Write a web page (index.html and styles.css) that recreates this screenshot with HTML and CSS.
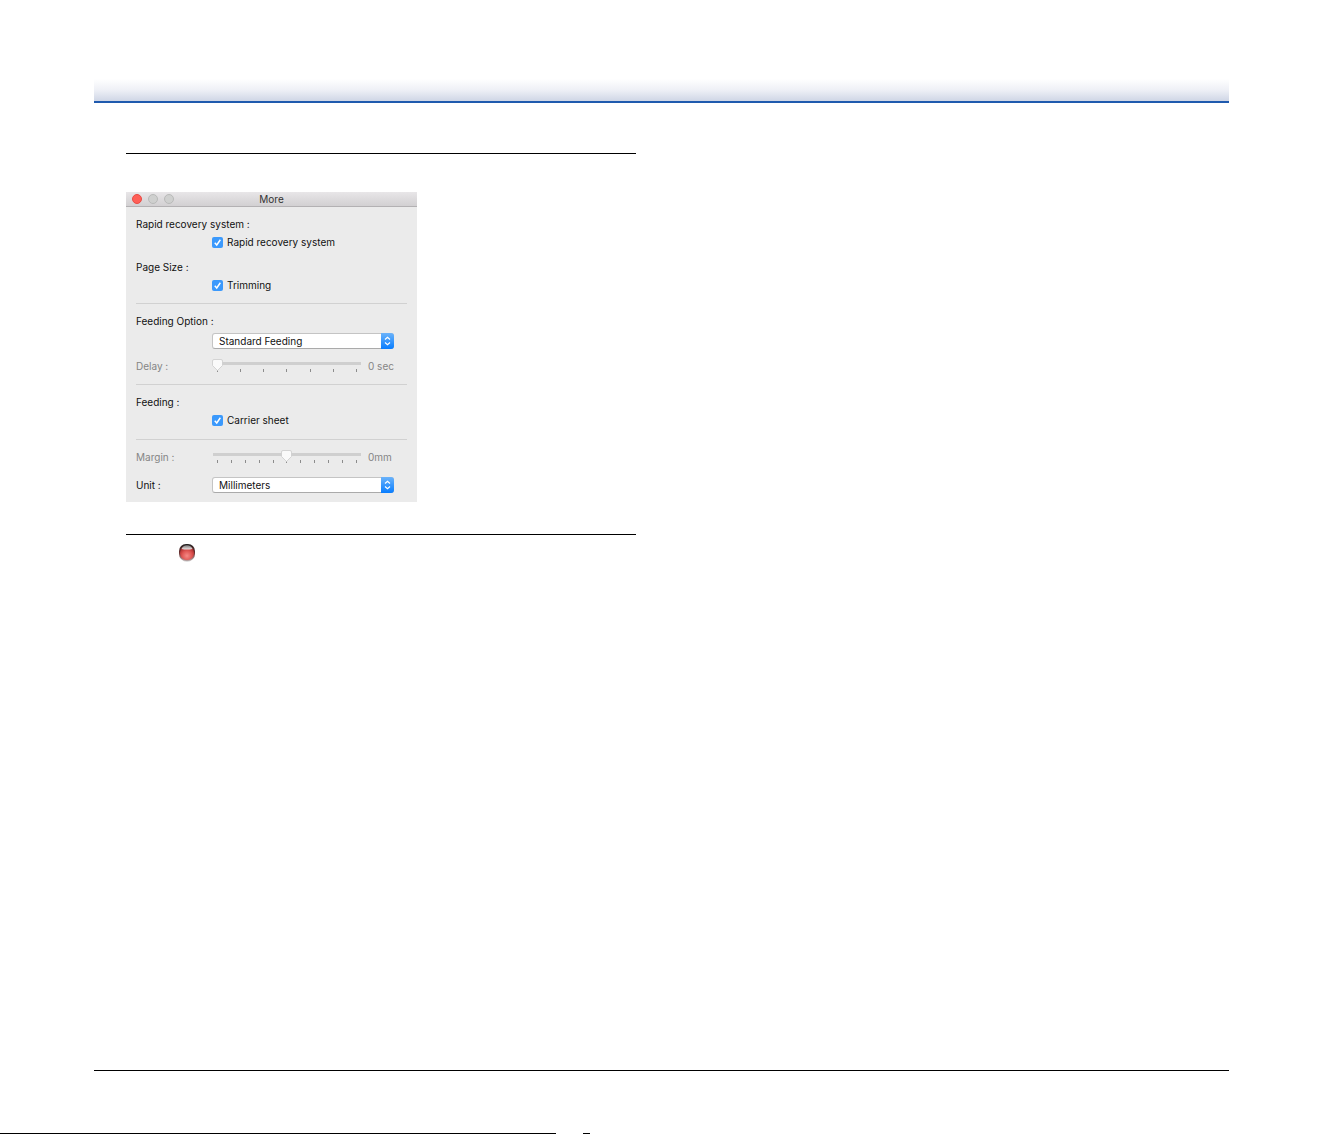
FILE: index.html
```html
<!DOCTYPE html>
<html lang="en">
<head>
<meta charset="utf-8">
<meta name="viewport" content="width=device-width, initial-scale=1">
<title>More</title>
<link rel="stylesheet" href="styles.css">
</head>
<body>
<header class="banner"></header>
<main class="content">
  <div class="column">
    <hr class="rule">
    <form class="dialog" aria-labelledby="dialog-title">
      <div class="titlebar">
        <div class="lights">
          <button type="button" class="light light-close" aria-label="Close"></button>
          <button type="button" class="light" aria-label="Minimize" disabled></button>
          <button type="button" class="light" aria-label="Zoom" disabled></button>
        </div>
        <h1 class="title" id="dialog-title">More</h1>
      </div>
      <div class="body">
        <section class="group">
          <div class="row"><span class="label">Rapid recovery system :</span></div>
          <div class="row indent"><label class="check"><input type="checkbox" checked>Rapid recovery system</label></div>
          <div class="row spaced"><span class="label">Page Size :</span></div>
          <div class="row indent"><label class="check"><input type="checkbox" checked>Trimming</label></div>
        </section>
        <section class="group">
          <div class="row"><label class="label" for="option">Feeding Option :</label></div>
          <div class="row indent lowered">
            <div class="popup">
              <select id="option"><option>Standard Feeding</option></select>
              <svg class="arrows" viewBox="0 0 13 16" aria-hidden="true"><path d="M4 6.500 6.500 4.300 9 6.500M4 9.500 6.500 11.700 9 9.500"/></svg>
            </div>
          </div>
          <div class="row spaced dimmed">
            <label class="label" for="delay">Delay :</label>
            <div class="slider">
              <input type="range" id="delay" min="0" max="6" value="0" disabled>
              <div class="ticks"><i></i><i></i><i></i><i></i><i></i><i></i><i></i></div>
            </div>
            <output class="value" for="delay">0 sec</output>
          </div>
        </section>
        <section class="group group-feeding">
          <div class="row"><span class="label">Feeding :</span></div>
          <div class="row indent"><label class="check"><input type="checkbox" checked>Carrier sheet</label></div>
        </section>
        <section class="group">
          <div class="row dimmed">
            <label class="label" for="margin">Margin :</label>
            <div class="slider">
              <input type="range" id="margin" min="-5" max="5" value="0" disabled>
              <div class="ticks"><i></i><i></i><i></i><i></i><i></i><i></i><i></i><i></i><i></i><i></i><i></i></div>
            </div>
            <output class="value" for="margin">0mm</output>
          </div>
          <div class="row apart">
            <label class="label" for="unit">Unit :</label>
            <div class="popup">
              <select id="unit"><option>Millimeters</option></select>
              <svg class="arrows" viewBox="0 0 13 16" aria-hidden="true"><path d="M4 6.500 6.500 4.300 9 6.500M4 9.500 6.500 11.700 9 9.500"/></svg>
            </div>
          </div>
        </section>
      </div>
    </form>
    <hr class="rule">
    <svg class="orb" viewBox="0 0 16 18" aria-hidden="true">
      <defs>
        <linearGradient id="rim" x1="0" y1="0" x2="0" y2="1"><stop offset="0" stop-color="#222"/><stop offset=".5" stop-color="#6a3030"/><stop offset="1" stop-color="#b9a8a8"/></linearGradient>
        <radialGradient id="core" cx=".5" cy=".7" r=".6"><stop offset="0" stop-color="#f58a86"/><stop offset=".6" stop-color="#df5552"/><stop offset="1" stop-color="#b03030"/></radialGradient>
        <linearGradient id="gloss" x1="0" y1="0" x2="0" y2="1"><stop offset="0" stop-color="#777"/><stop offset="1" stop-color="#eee4e4"/></linearGradient>
      </defs>
      <rect x="1" y="2" width="14" height="16" rx="7" fill="#dedede"/>
      <rect width="16" height="17" rx="7" fill="url(#rim)"/>
      <rect x="1" y="2" width="14" height="14" rx="6.500" fill="url(#core)"/>
      <path d="M2.500 5Q4 1.200 8 1.200T13.500 5Q8 6 2.500 5Z" fill="url(#gloss)"/>
    </svg>
  </div>
</main>
<footer class="footer">
  <hr class="rule">
</footer>
<div class="edge"><span class="edge-line"></span><span class="edge-dash"></span></div>
</body>
</html>
```
FILE: styles.css
```css
* { box-sizing: border-box; }
body {
  margin: 0;
  min-height: 100vh;
  display: flex;
  flex-direction: column;
  background: #fff;
  color: #111;
  font: 10px/18px Inter, "Liberation Sans", sans-serif;
}
.banner {
  height: 24px;
  margin: 79px 94px 0;
  border-bottom: 2px solid #1f5aae;
  background: linear-gradient(#fff, #eef0f6 50%, #cfd6e6);
}
.content {
  flex: 1;
  display: grid;
  grid-template-columns: 1fr 1fr;
  gap: 50px;
  padding: 50px 94px 0 126px;
}
.column { min-width: 0; margin-right: 17px; }
.rule { height: 1px; margin: 0; border: 0; background: #000; }
.dialog {
  max-width: 291px;
  margin: 38px 0 32px;
  background: #ebebeb;
}
.titlebar {
  display: grid;
  grid-template-columns: 1fr auto 1fr;
  align-items: center;
  height: 15px;
  padding: 0 6px;
  background: linear-gradient(#e8e6e8, #d2d0d2);
  border-bottom: 1px solid #b3b1b3;
}
.lights { display: flex; gap: 6px; }
.light {
  width: 10px;
  height: 10px;
  padding: 0;
  border: 1px solid #b9bab9;
  border-radius: 50%;
  background: #cfd0cf;
}
.light-close { background: #ff5f57; border-color: #e94b45; }
.title { margin: 0; font-size: 10px; line-height: 14px; font-weight: 400; color: #333; }
.body { padding: 0 10px 8px; }
.group { padding: 8px 0 9px; border-bottom: 1px solid #d1d1d1; }
.group-feeding { padding-bottom: 10px; }
.group:last-child { padding-bottom: 0; border: 0; }
.row { display: flex; align-items: center; height: 18px; }
.indent { padding-left: 76px; }
.lowered { margin-top: 2px; }
.spaced { margin-top: 7px; }
.apart { margin-top: 10px; }
.label { width: 76px; white-space: nowrap; }
.dimmed { color: #858585; }
.check { display: flex; align-items: center; gap: 4px; }
.check input {
  appearance: none;
  width: 11px;
  height: 11px;
  margin: 0;
  border-radius: 2px;
  background: #3b99fc url("data:image/svg+xml,%3Csvg xmlns='http://www.w3.org/2000/svg' viewBox='0 0 10 10'%3E%3Cpath d='M2.500 5.300 4.300 7.300 7.600 2.500' fill='none' stroke='white' stroke-width='1.300'/%3E%3C/svg%3E");
}
.popup { position: relative; width: 182px; height: 16px; }
.popup select {
  appearance: none;
  display: block;
  width: 100%;
  height: 16px;
  padding: 0 20px 0 6px;
  border: 1px solid #c4c4c4;
  border-bottom-color: #aaa;
  border-radius: 3px;
  background: #fff;
  color: #111;
  font: inherit;
  line-height: 14px;
}
.arrows {
  position: absolute;
  top: 0;
  right: 0;
  width: 13px;
  height: 16px;
  border-radius: 0 3px 3px 0;
  background: linear-gradient(#6bb3fa, #087dff);
  fill: none;
  stroke: #fff;
  stroke-width: 1.2;
  pointer-events: none;
}
.slider { width: 149px; height: 14px; }
.slider input {
  appearance: none;
  position: relative;
  z-index: 1;
  display: block;
  width: 100%;
  height: 12px;
  margin: 0;
  background: none;
}
.slider input::-webkit-slider-runnable-track {
  height: 12px;
  background: linear-gradient(#cfcfcf, #cfcfcf) 1px 3px / 148px 3px no-repeat;
}
.slider input::-webkit-slider-thumb {
  appearance: none;
  width: 11px;
  height: 12px;
  background: url("data:image/svg+xml,%3Csvg xmlns='http://www.w3.org/2000/svg' viewBox='0 0 11 12'%3E%3Cpath d='M2 .5H9Q10.500 .5 10.500 2V6.500L5.500 11.500 .5 6.500V2Q.5 .5 2 .5Z' fill='%23fafafa' stroke='%23cccccc' stroke-width='.8'/%3E%3C/svg%3E");
}
.ticks { display: flex; justify-content: space-between; padding: 0 4px 0 5px; margin-top: -2px; }
.ticks i { width: 1px; height: 3px; background: #8c8c8c; }
.value { margin-left: 7px; white-space: nowrap; }
.orb { display: block; width: 16px; height: 18px; margin: 9px 0 0 53px; }
.footer { padding: 0 94px 62px; }
.edge { display: flex; height: 1px; }
.edge-line { width: 42%; background: #000; }
.edge-dash { width: 7px; margin-left: 27px; background: #000; }
```
